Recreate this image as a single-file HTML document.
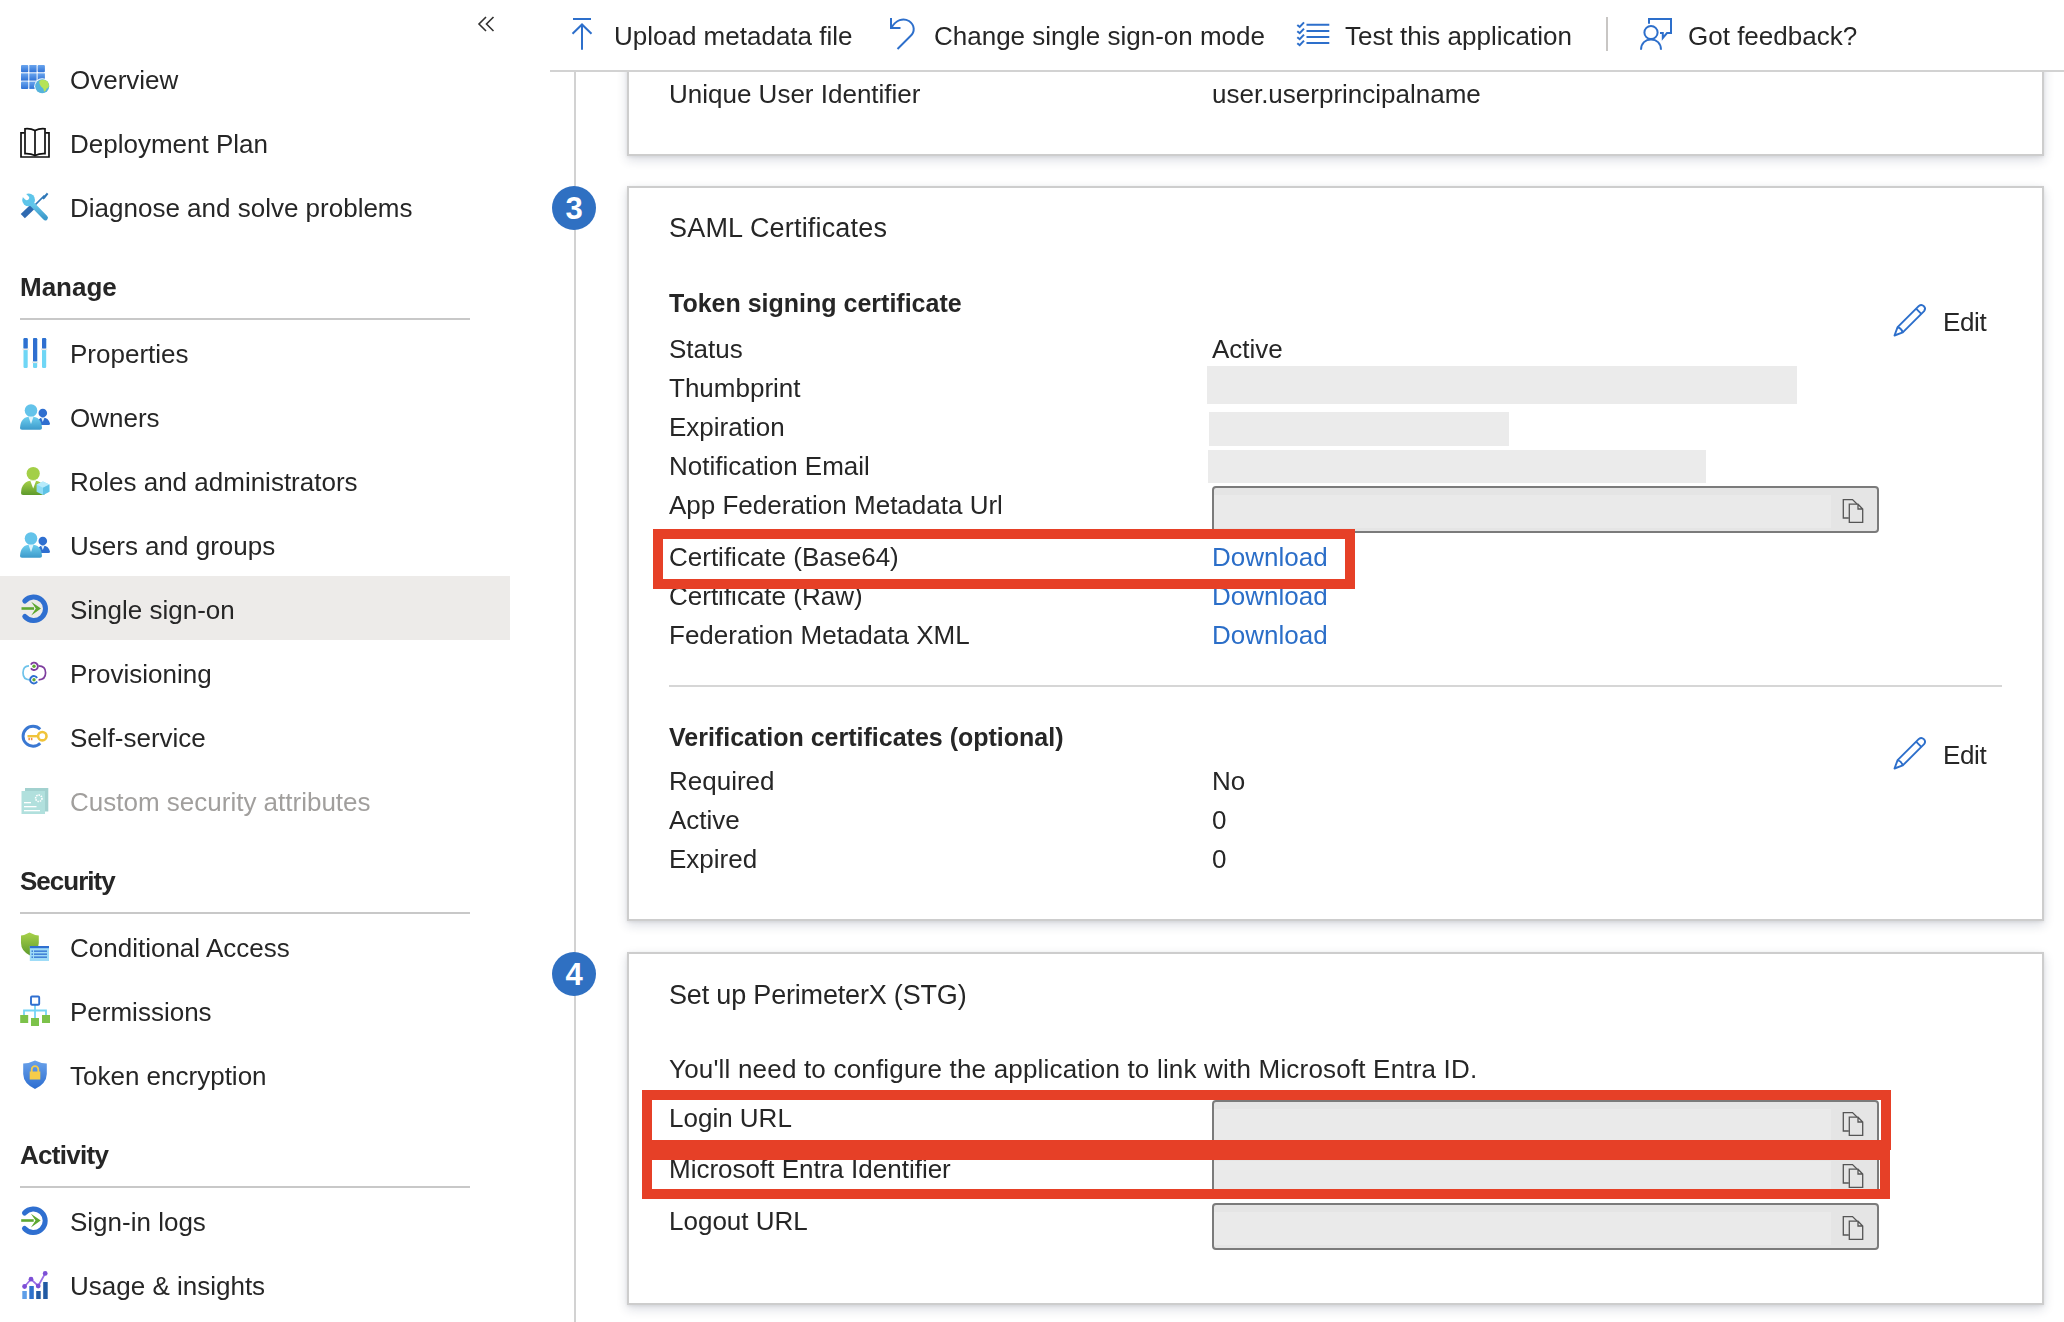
<!DOCTYPE html>
<html><head><meta charset="utf-8">
<style>
*{margin:0;padding:0;box-sizing:border-box}
html,body{width:2064px;height:1322px;overflow:hidden;background:#fff}
body{position:relative;font-family:"Liberation Sans",sans-serif;color:#262626}
.t{position:absolute;will-change:transform;white-space:nowrap;font-size:26px;line-height:26px}
.b{font-weight:bold}
.lnk{color:#2b6ec8}
.box{position:absolute}
.card{position:absolute;left:627px;width:1417px;border:2px solid #cdcdcd;background:#fff;box-shadow:0 4px 10px rgba(30,45,80,.16),0 1px 3px rgba(0,0,0,.08)}
.rule{position:absolute;height:2px;background:#c8c8c8}
.gbar{position:absolute;background:#ebebeb}
.inp{position:absolute;left:1212px;width:667px;height:47px;border:2px solid #7b7b7b;border-radius:4px;background:#e5e5e5;overflow:hidden}
.inp i{position:absolute;left:0;top:7px;width:617px;height:33px;background:#eaeaea}
.red{position:absolute;border:10px solid #e64027}
.circ{position:absolute;width:44px;height:44px;border-radius:50%;background:#2f70c2;color:#fff;font-weight:bold;font-size:31px;line-height:46px;text-align:center}
svg{position:absolute;left:0;top:0}
</style></head><body>

<!-- sidebar selection -->
<div class="box" style="left:0;top:576px;width:510px;height:64px;background:#edebe9"></div>
<div class="rule" style="left:20px;top:318px;width:450px"></div>
<div class="rule" style="left:20px;top:912px;width:450px"></div>
<div class="rule" style="left:20px;top:1186px;width:450px"></div>

<!-- sidebar text (baseline-22) -->
<div class="t" style="left:70px;top:67px">Overview</div>
<div class="t" style="left:70px;top:131px">Deployment Plan</div>
<div class="t" style="left:70px;top:195px">Diagnose and solve problems</div>
<div class="t b" style="left:20px;top:274px">Manage</div>
<div class="t" style="left:70px;top:341px">Properties</div>
<div class="t" style="left:70px;top:405px">Owners</div>
<div class="t" style="left:70px;top:469px">Roles and administrators</div>
<div class="t" style="left:70px;top:533px">Users and groups</div>
<div class="t" style="left:70px;top:597px">Single sign-on</div>
<div class="t" style="left:70px;top:661px">Provisioning</div>
<div class="t" style="left:70px;top:725px">Self-service</div>
<div class="t" style="left:70px;top:789px;color:#a19f9d">Custom security attributes</div>
<div class="t b" style="left:20px;top:868px;letter-spacing:-1px">Security</div>
<div class="t" style="left:70px;top:935px">Conditional Access</div>
<div class="t" style="left:70px;top:999px">Permissions</div>
<div class="t" style="left:70px;top:1063px">Token encryption</div>
<div class="t b" style="left:20px;top:1142px;letter-spacing:-0.7px">Activity</div>
<div class="t" style="left:70px;top:1209px">Sign-in logs</div>
<div class="t" style="left:70px;top:1273px">Usage &amp; insights</div>

<!-- toolbar (placed after content later) -->

<!-- timeline -->
<div class="box" style="left:574px;top:72px;width:2px;height:1250px;background:#d2d2d2"></div>

<!-- card 1 -->
<div class="card" style="top:-20px;height:176px"></div>
<div class="t" style="left:669px;top:81px">Unique User Identifier</div>
<div class="t" style="left:1212px;top:81px">user.userprincipalname</div>

<!-- card 2 -->
<div class="card" style="top:186px;height:735px"></div>
<div class="circ" style="left:552px;top:186px">3</div>
<div class="t" style="left:669px;top:215px;font-size:27px;letter-spacing:0.18px">SAML Certificates</div>
<div class="t b" style="left:669px;top:290px;font-size:25px">Token signing certificate</div>
<div class="t" style="left:1943px;top:309px;letter-spacing:-0.4px">Edit</div>
<div class="t" style="left:669px;top:336px">Status</div>
<div class="t" style="left:1212px;top:336px">Active</div>
<div class="t" style="left:669px;top:375px">Thumbprint</div>
<div class="gbar" style="left:1207px;top:366px;width:590px;height:38px"></div>
<div class="t" style="left:669px;top:414px">Expiration</div>
<div class="gbar" style="left:1209px;top:412px;width:300px;height:34px"></div>
<div class="t" style="left:669px;top:453px">Notification Email</div>
<div class="gbar" style="left:1208px;top:450px;width:498px;height:33px"></div>
<div class="t" style="left:669px;top:492px">App Federation Metadata Url</div>
<div class="inp" style="top:486px"><i></i></div>
<div class="t" style="left:669px;top:544px">Certificate (Base64)</div>
<div class="t lnk" style="left:1212px;top:544px">Download</div>
<div class="t" style="left:669px;top:583px">Certificate (Raw)</div>
<div class="t lnk" style="left:1212px;top:583px">Download</div>
<div class="t" style="left:669px;top:622px">Federation Metadata XML</div>
<div class="t lnk" style="left:1212px;top:622px">Download</div>
<div class="box" style="left:669px;top:685px;width:1333px;height:2px;background:#d6d6d6"></div>
<div class="t b" style="left:669px;top:724px;font-size:25px">Verification certificates (optional)</div>
<div class="t" style="left:1943px;top:742px;letter-spacing:-0.4px">Edit</div>
<div class="t" style="left:669px;top:768px">Required</div>
<div class="t" style="left:1212px;top:768px">No</div>
<div class="t" style="left:669px;top:807px">Active</div>
<div class="t" style="left:1212px;top:807px">0</div>
<div class="t" style="left:669px;top:846px">Expired</div>
<div class="t" style="left:1212px;top:846px">0</div>
<div class="red" style="left:653px;top:529px;width:702px;height:60px"></div>

<!-- card 3 -->
<div class="card" style="top:952px;height:353px"></div>
<div class="circ" style="left:552px;top:952px">4</div>
<div class="t" style="left:669px;top:982px;font-size:27px;letter-spacing:-0.18px">Set up PerimeterX (STG)</div>
<div class="t" style="left:669px;top:1056px;letter-spacing:0.19px">You'll need to configure the application to link with Microsoft Entra ID.</div>
<div class="t" style="left:669px;top:1105px">Login URL</div>
<div class="inp" style="top:1100px"><i></i></div>
<div class="t" style="left:669px;top:1156px">Microsoft Entra Identifier</div>
<div class="inp" style="top:1152px"><i></i></div>
<div class="t" style="left:669px;top:1208px">Logout URL</div>
<div class="inp" style="top:1203px"><i></i></div>
<div class="red" style="left:642px;top:1090px;width:1249px;height:60px"></div>
<div class="red" style="left:642px;top:1150px;width:1248px;height:49px"></div>

<!-- toolbar bg -->
<div class="box" style="left:520px;top:0;width:1544px;height:70px;background:#fff"></div>
<div class="box" style="left:550px;top:70px;width:1514px;height:2px;background:#d2d2d2"></div>
<div class="box" style="left:1606px;top:17px;width:2px;height:34px;background:#c8c6c4"></div>
<div class="t" style="left:614px;top:23px">Upload metadata file</div>
<div class="t" style="left:934px;top:23px">Change single sign-on mode</div>
<div class="t" style="left:1345px;top:23px">Test this application</div>
<div class="t" style="left:1688px;top:23px">Got feedback?</div>
<!--ICONS-->
<svg width="2064" height="1322" viewBox="0 0 2064 1322">
<defs>
<linearGradient id="gOv" x1="0" y1="0" x2="0" y2="1"><stop offset="0" stop-color="#6aa5ee"/><stop offset="1" stop-color="#2f72d6"/></linearGradient>
<linearGradient id="gLB" x1="0" y1="0" x2="0" y2="1"><stop offset="0" stop-color="#6fd0f0"/><stop offset="1" stop-color="#3c9acb"/></linearGradient>
<linearGradient id="gGr" x1="0" y1="0" x2="0" y2="1"><stop offset="0" stop-color="#a8d24a"/><stop offset="1" stop-color="#5e9a2c"/></linearGradient>
<linearGradient id="gSh" x1="0" y1="0" x2="0" y2="1"><stop offset="0" stop-color="#6aa2ea"/><stop offset="1" stop-color="#2c6dd0"/></linearGradient>
</defs>
<!-- collapse chevrons -->
<g fill="none" stroke="#323130" stroke-width="1.6">
<path d="M486,17 L479,24 L486,31"/><path d="M493.5,17 L486.5,24 L493.5,31"/>
</g>

<!-- Overview grid + globe -->
<g fill="url(#gOv)">
<rect x="21" y="65" width="7.3" height="7.3" rx="1"/><rect x="29.3" y="65" width="7.3" height="7.3"/><rect x="37.6" y="65" width="7.3" height="7.3" rx="1"/>
<rect x="21" y="73.3" width="7.3" height="7.3"/><rect x="29.3" y="73.3" width="7.3" height="7.3"/><rect x="37.6" y="73.3" width="7.3" height="7.3"/>
<rect x="21" y="81.6" width="7.3" height="7.3" rx="1"/><rect x="29.3" y="81.6" width="7.3" height="7.3"/><rect x="37.6" y="81.6" width="7.3" height="7.3"/>
</g>
<circle cx="42.2" cy="86.3" r="8" fill="#fff"/>
<circle cx="42.2" cy="86.3" r="7" fill="#56b3dc"/>
<path d="M39.8,80.6 C42.8,79.2 46.5,79.8 48.3,82.5 L49,85.8 C48.6,87.6 47.6,88.2 46.6,88.6 L45.6,90.8 L44,91.8 L43.6,89.2 C42.6,87.6 41,87.2 40.4,85.6 C39.4,84.2 38.8,82.2 39.8,80.6Z" fill="#b6e356"/>

<!-- Deployment plan book -->
<g fill="none" stroke="#111" stroke-width="1.7">
<path d="M24.5,132.8 H21 V157 H49 V132.8 H45.5"/>
<path d="M25,128.8 Q30.5,128.2 35,130.6 Q39.5,128.2 45,128.8 V153.6 Q39.5,153.2 35,155.6 Q30.5,153.2 25,153.6 Z"/>
<path d="M35,130.6 V155.6"/>
</g>

<!-- Diagnose: wrench + screwdriver -->
<mask id="wm"><rect x="10" y="185" width="45" height="45" fill="#fff"/><path d="M20.5,191.5 L26.8,197.8" stroke="#000" stroke-width="4.6" stroke-linecap="round"/></mask>
<g>
<path d="M33.5,206.5 L44.5,195.5" stroke="#2f78b8" stroke-width="1.7"/>
<path d="M42.8,198.6 L47.6,193.4 L44.2,197.8Z" stroke="#2f78b8" stroke-width="2" fill="#2f78b8"/>
<path d="M22.8,216.2 L33,206.4" stroke="#2f6ab0" stroke-width="6"/>
<path d="M30.5,202.5 L45.3,217.8" stroke="url(#gLB)" stroke-width="5.2" stroke-linecap="round"/>
<circle cx="28.6" cy="199.9" r="6.4" fill="#5ec5ea" mask="url(#wm)"/>
</g>

<!-- Properties sliders -->
<g>
<rect x="23.5" y="338" width="4.2" height="30" rx="1.2" fill="#6fd6f5"/>
<rect x="23.5" y="338" width="4.2" height="11" rx="1.2" fill="#2f6fd0"/>
<rect x="22.5" y="348.5" width="6.2" height="1.6" fill="#e8e8e8"/>
<rect x="33" y="338" width="4.2" height="30" rx="1.2" fill="#6fd6f5"/>
<rect x="33" y="338" width="4.2" height="23.5" rx="1.2" fill="#2f6fd0"/>
<rect x="32" y="361.5" width="6.2" height="1.6" fill="#e8e8e8"/>
<rect x="42" y="338" width="4.2" height="30" rx="1.2" fill="#6fd6f5"/>
<rect x="42" y="338" width="4.2" height="11" rx="1.2" fill="#2f6fd0"/>
<rect x="41" y="348.5" width="6.2" height="1.6" fill="#e8e8e8"/>
</g>

<!-- Owners / Users people -->
<g id="ppl">
<circle cx="42.8" cy="413" r="4.3" fill="#2f6fd0"/>
<path d="M37,425 Q37.5,417.5 42.8,417.5 Q48.5,417.5 50,423.5 Q50,425 48.5,425 Z" fill="#2f6fd0"/>
<path d="M41.2,418 L42.8,422 L44.4,418Z" fill="#dff1fb"/>
<circle cx="31" cy="410.5" r="6.3" fill="#63c3ea"/>
<path d="M20,428 Q20.5,416.5 31,416.5 Q41.5,416.5 42,428 Q42,429.7 40,429.7 H22 Q20,429.7 20,428 Z" fill="url(#gLB)"/>
<path d="M28.5,416.8 L31,424 L33.5,416.8Z" fill="#dff3fb"/>
</g>
<use href="#ppl" x="0" y="128"/>

<!-- Roles -->
<g>
<circle cx="33.2" cy="473.5" r="6.6" fill="#a3cf47"/>
<path d="M21,493 Q21.5,480.5 33,480.5 Q44.5,480.5 45,493 Q45,495 43,495 H23 Q21,495 21,493 Z" fill="url(#gGr)"/>
<path d="M30.3,480.8 L33.2,488.5 L36.1,480.8Z" fill="#fff"/>
<path d="M43,481.5 L49.4,484.5 V491.8 L43,495 L36.6,491.8 V484.5 Z" fill="#8fdcf5"/>
<path d="M36.6,484.5 L43,487.7 L49.4,484.5 L43,481.5Z" fill="#b7ebfb"/>
<path d="M43,487.7 V495 L49.4,491.8 V484.5Z" fill="#5ec2e6"/>
</g>

<!-- SSO / Sign-in arc arrow -->
<g id="sso">
<path d="M24.8,601 A11.8,11.8 0 1 1 24.8,616.5" fill="none" stroke="#2f6fd0" stroke-width="5" stroke-linecap="round"/>
<path d="M21.5,607.2 H34 V609.8 H21.5Z" fill="#5ea831"/>
<path d="M31.2,601.8 L41,608.5 L31.2,615.5 L35.8,608.5Z" fill="#5ea831"/>
</g>
<use href="#sso" x="-0.3" y="612"/>

<!-- Provisioning -->
<g fill="none" stroke-width="1.7">
<path d="M29,665.8 Q23,665.8 23,672.8 Q23,679.8 29.6,679.8" stroke="#6ec3ea"/>
<path d="M38.6,665.8 Q45.6,665.8 45.6,672.8 Q45.6,679.8 38.6,679.8" stroke="#7e3e9e"/>
<path d="M30.9,664.6 A3.7,3.7 0 1 1 31,668.2" stroke="#7e3e9e" stroke-width="1.9"/>
<path d="M37.1,678 A3.7,3.7 0 1 0 37.1,681.5" stroke="#2f6fd0" stroke-width="1.9"/>
</g>
<circle cx="34" cy="666.3" r="1.7" fill="#5ea831"/>
<circle cx="34" cy="679.7" r="1.7" fill="#5ea831"/>

<!-- Self-service key -->
<g>
<path d="M40.2,729.2 A10,10 0 1 0 40.2,743.2" fill="none" stroke="#3a78d2" stroke-width="2.9"/>
<circle cx="42.3" cy="736.2" r="4.2" fill="none" stroke="#f0c43a" stroke-width="2.6"/>
<rect x="27.5" y="735" width="11" height="2.4" fill="#f0c43a"/>
<rect x="28.4" y="737.8" width="1.5" height="2.4" fill="#f08a3c"/><rect x="30.9" y="737.8" width="1.5" height="2.4" fill="#f08a3c"/>
</g>

<!-- Custom security attributes (disabled) -->
<g>
<rect x="25" y="788" width="23.3" height="23.5" fill="#a2d1cf"/>
<rect x="21.5" y="791" width="23.5" height="23" fill="#b1e0dd"/>
<circle cx="38.8" cy="798.3" r="3.2" fill="none" stroke="#fff" stroke-width="1.6" stroke-dasharray="1.5 0.9"/>
<rect x="24" y="802" width="7" height="1.3" fill="#fff"/>
<rect x="24" y="806" width="12.5" height="1.3" fill="#fff"/>
<rect x="24" y="810" width="16" height="1.3" fill="#fff"/>
</g>

<!-- Conditional Access -->
<g>
<path d="M29.5,932.5 Q25,935 21,935.5 V943 Q21,951 30,955.5 Q38.5,951 38.8,943 V935.5 Q34,935 29.5,932.5Z" fill="url(#gGr)"/>
<rect x="29.8" y="946" width="19.2" height="15" fill="#9fdcf7"/>
<rect x="29.8" y="946" width="19.2" height="2.2" fill="#2f6fd0"/>
<rect x="31.5" y="950.5" width="1.5" height="1.3" fill="#2f6fd0"/><rect x="34" y="950.5" width="13" height="1.3" fill="#2f6fd0"/>
<rect x="31.5" y="953.5" width="1.5" height="1.3" fill="#2f6fd0"/><rect x="34" y="953.5" width="13" height="1.3" fill="#2f6fd0"/>
<rect x="31.5" y="956.5" width="1.5" height="1.3" fill="#2f6fd0"/><rect x="34" y="956.5" width="13" height="1.3" fill="#2f6fd0"/>
</g>

<!-- Permissions -->
<g>
<path d="M35,1005 V1019 M24,1018 V1010.5 H46 V1018" fill="none" stroke="#75d4f5" stroke-width="1.8"/>
<rect x="31" y="996.5" width="8.2" height="8.2" rx="1" fill="none" stroke="#2f6fd0" stroke-width="1.9"/>
<rect x="20.2" y="1015" width="8" height="8" fill="#7cc24a"/>
<rect x="31" y="1018" width="8" height="8" fill="#7cc24a"/>
<rect x="42" y="1015" width="8" height="8" fill="#7cc24a"/>
</g>

<!-- Token encryption shield -->
<g>
<path d="M35,1060.5 Q29,1063.5 23.2,1063.5 V1074 Q23.5,1083.5 35,1089 Q46.5,1083.5 46.8,1074 V1063.5 Q41,1063.5 35,1060.5Z" fill="url(#gSh)"/>
<path d="M31.7,1072 V1069.5 A3.3,3.3 0 0 1 38.3,1069.5 V1072" fill="none" stroke="#f5cc4a" stroke-width="1.8"/>
<rect x="29.7" y="1071.5" width="10.6" height="8" fill="#f5cc4a"/>
</g>

<!-- Usage & insights -->
<g>
<rect x="22.3" y="1291" width="4.5" height="8" fill="#5e9ee8"/>
<rect x="29.3" y="1286" width="4.5" height="13" fill="#2f72cc"/>
<rect x="36.2" y="1291" width="4.5" height="8" fill="#225aa3"/>
<rect x="43.2" y="1282" width="4.5" height="17" fill="#225aa3"/>
<path d="M24.6,1286.5 L31,1279.2 L38.2,1286 L45.2,1273.4" fill="none" stroke="#9a6fe6" stroke-width="1.8"/>
<circle cx="24.6" cy="1286.5" r="2.4" fill="#7d4fd6"/><circle cx="31" cy="1279.2" r="2.4" fill="#7d4fd6"/>
<circle cx="38.2" cy="1286" r="2.4" fill="#7d4fd6"/><circle cx="45.2" cy="1273.4" r="2.4" fill="#7d4fd6"/>
</g>

<!-- toolbar icons -->
<g fill="none" stroke="#2d6fcb" stroke-width="2">
<path d="M573,19 H591"/><path d="M582,24.8 V49.8"/><path d="M572.5,33.8 L582,24.5 L591.5,33.8"/>
<path d="M891,18 V28 H900.5"/><path d="M891.5,27.5 C896,20 903,17.5 909,21 C915,25 915,32 910.5,36 L897.5,49"/>
<path d="M1306.5,24.8 H1329.3 M1306.5,31 H1329.3 M1306.5,37 H1329.3 M1306.5,43 H1329.3"/>
<path d="M1297.3,25 L1299.7,27 L1304,22.4 M1297.3,31.2 L1299.7,33.2 L1304,28.6 M1297.3,37.2 L1299.7,39.2 L1304,34.6 M1297.3,43.2 L1299.7,45.2 L1304,40.6"/>
<path d="M1649,23.7 V19 H1671 V33 H1667 L1662.8,38 V33 H1660"/>
<circle cx="1651" cy="32.5" r="6.6"/>
<path d="M1641,49.8 C1641,43 1645.5,39.5 1651,39.5 C1656.5,39.5 1661,43 1661,49.8"/>
</g>

<!-- edit pencils -->
<g id="pen" fill="none" stroke="#2d6fcb" stroke-width="1.9" stroke-linejoin="round">
<path d="M1894.5,335.5 L1897.6,327.2 L1918.9,305.9 A3.7,3.7 0 0 1 1924.1,311.1 L1902.8,332.4 Z"/>
<path d="M1916.1,308.7 L1921.3,313.9 M1897.6,327.2 Q1901.6,328.4 1902.8,332.4"/>
</g>
<use href="#pen" x="0" y="433"/>

<!-- copy icons -->
<g id="cpy" fill="none" stroke="#555" stroke-width="1.3">
<path d="M1848.8,518 H1843.3 V499.6 H1852.5 L1857,504"/>
<path d="M1849.3,504.2 H1858 L1862.7,509 V522.3 H1849.3 Z M1858,504.2 V509 H1862.7"/>
</g>
<use href="#cpy" x="0" y="613"/>
<use href="#cpy" x="0" y="665"/>
<use href="#cpy" x="0" y="717"/>
</svg>

</body></html>
